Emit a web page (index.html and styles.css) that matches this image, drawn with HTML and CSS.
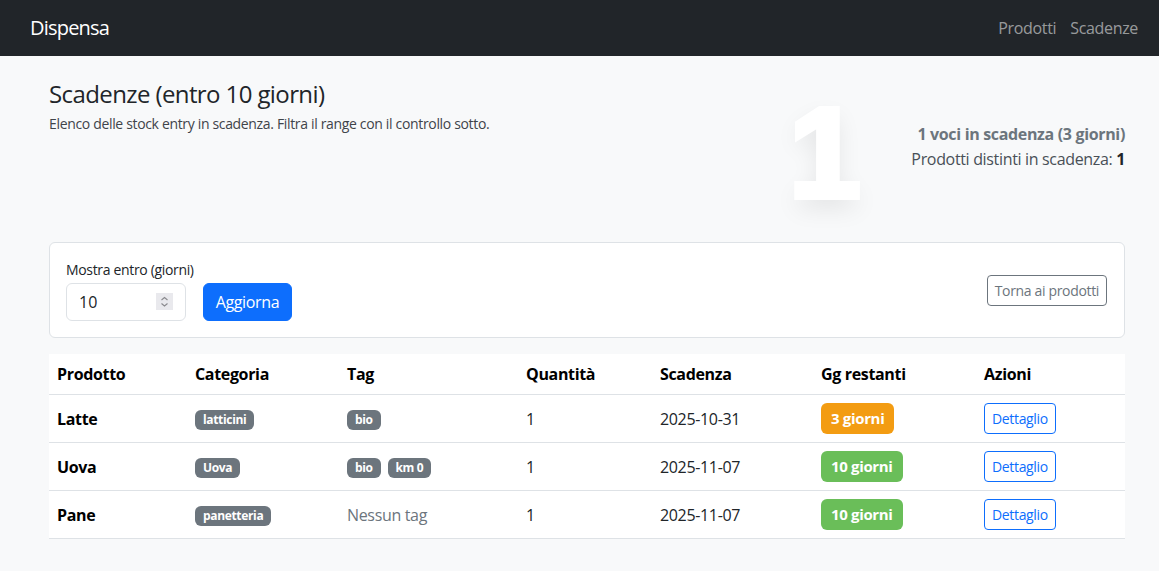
FILE: index.html
```html
<!DOCTYPE html>
<html lang="it">
<head>
<meta charset="utf-8">
<title>Dispensa - Scadenze</title>
<link rel="stylesheet" href="styles.css">
</head>
<body>
<nav class="navbar">
  <a class="brand" href="#">Dispensa</a>
  <div class="nav-links">
    <a class="nav-link" href="#">Prodotti</a>
    <a class="nav-link" href="#">Scadenze</a>
  </div>
</nav>
<main class="main">
  <header class="page-head">
    <div class="titles">
      <h1 class="title">Scadenze (entro 10 giorni)</h1>
      <p class="subtitle">Elenco delle stock entry in scadenza. Filtra il range con il controllo sotto.</p>
    </div>
    <div class="stats">
      <div class="big-number">1</div>
      <div class="stats-text">
        <div class="stats-main">1 voci in scadenza (3 giorni)</div>
        <div class="stats-sub">Prodotti distinti in scadenza: <strong>1</strong></div>
      </div>
    </div>
  </header>

  <section class="card">
    <form class="filter">
      <div class="field">
        <label class="label" for="days">Mostra entro (giorni)</label>
        <div class="input-wrap">
          <input class="input" id="days" type="text" value="10">
          <span class="spinner">
            <svg width="17" height="17" viewBox="0 0 17 17"><path d="M5.5 7 8.5 4.5 11.5 7" fill="none" stroke="#8a8a8e" stroke-width="1.1"/><path d="M5.5 10.5 8.5 13 11.5 10.5" fill="none" stroke="#8a8a8e" stroke-width="1.1"/></svg>
          </span>
        </div>
      </div>
      <button type="button" class="btn btn-primary">Aggiorna</button>
    </form>
    <a class="btn-sm btn-outline-secondary" href="#">Torna ai prodotti</a>
  </section>

  <table class="table">
    <thead>
      <tr>
        <th class="c1">Prodotto</th>
        <th class="c2">Categoria</th>
        <th class="c3">Tag</th>
        <th class="c4">Quantità</th>
        <th class="c5">Scadenza</th>
        <th class="c6">Gg restanti</th>
        <th class="c7">Azioni</th>
      </tr>
    </thead>
    <tbody>
      <tr>
        <td class="name">Latte</td>
        <td><span class="badge">latticini</span></td>
        <td><span class="badge">bio</span></td>
        <td>1</td>
        <td>2025-10-31</td>
        <td><span class="days days-warn">3 giorni</span></td>
        <td><a class="btn-sm btn-outline-primary" href="#">Dettaglio</a></td>
      </tr>
      <tr>
        <td class="name">Uova</td>
        <td><span class="badge">Uova</span></td>
        <td><span class="badge">bio</span> <span class="badge">km 0</span></td>
        <td>1</td>
        <td>2025-11-07</td>
        <td><span class="days days-ok">10 giorni</span></td>
        <td><a class="btn-sm btn-outline-primary" href="#">Dettaglio</a></td>
      </tr>
      <tr>
        <td class="name">Pane</td>
        <td><span class="badge">panetteria</span></td>
        <td class="muted">Nessun tag</td>
        <td>1</td>
        <td>2025-11-07</td>
        <td><span class="days days-ok">10 giorni</span></td>
        <td><a class="btn-sm btn-outline-primary" href="#">Dettaglio</a></td>
      </tr>
    </tbody>
  </table>
</main>
</body>
</html>
```

FILE: styles.css
```css
* { box-sizing: border-box; }
html, body { margin: 0; }
body {
  font-family: "Open Sans", "Noto Sans", sans-serif;
  font-size: 16px;
  line-height: 1.5;
  letter-spacing: -0.021em;
  color: #212529;
  background: #f8f9fa;
}
a { text-decoration: none; }

.navbar {
  height: 56px;
  background: #212529;
  display: flex;
  align-items: center;
  justify-content: space-between;
  padding: 0 14px 0 30px;
}
.brand { color: #fff; font-size: 20px; line-height: 30px; letter-spacing: -0.04em; }
.nav-links { display: flex; }
.nav-link { color: rgba(255,255,255,.55); padding: 0 7px; font-size: 16px; }

.main { padding: 24px 34px 40px 49px; }

.page-head {
  display: flex;
  justify-content: space-between;
  align-items: flex-start;
  margin-bottom: 24px;
}
.title { margin: 0 0 4px; font-size: 24px; font-weight: 400; line-height: 1.2; letter-spacing: -0.025em; }
.subtitle { margin: 0; font-size: 14px; color: #3f444a; }

.stats { display: flex; align-items: center; margin-top: 8px; }
.big-number {
  font-family: "Liberation Sans", Arial, sans-serif;
  font-weight: 700;
  font-size: 128px;
  line-height: 130px;
  letter-spacing: 0;
  color: #fff;
  -webkit-text-stroke: 6px #fff;
  text-shadow: 0 10px 24px rgba(0,0,0,.10);
  margin-right: 51px;
}
.stats-text { text-align: right; line-height: 25px; margin-top: -12px; }
.stats-main { font-weight: 700; color: #6c757d; }
.stats-sub { color: #495057; }
.stats-sub strong { color: #212529; }

.card {
  background: #fff;
  border: 1px solid #dee2e6;
  border-radius: 6px;
  padding: 16px;
  display: flex;
  align-items: center;
  justify-content: space-between;
  margin-bottom: 16px;
}
.filter { display: flex; align-items: flex-end; gap: 9px; }
.field { display: flex; flex-direction: column; }
.label { font-size: 14px; line-height: 21px; margin-bottom: 3px; }
.input-wrap { position: relative; width: 120px; }
.input {
  width: 120px;
  height: 38px;
  border: 1px solid #dee2e6;
  border-radius: 6px;
  padding: 6px 12px;
  font: inherit;
  color: #212529;
  background: #fff;
}
.spinner {
  position: absolute;
  right: 13px;
  top: 10px;
  width: 17px;
  height: 17px;
  background: #e9e9ed;
  display: block;
}
.spinner svg { display: block; }

.btn {
  font: inherit;
  letter-spacing: inherit;
  border: 1px solid transparent;
  border-radius: 6px;
  height: 38px;
  padding: 6px 12px;
  cursor: pointer;
}
.btn-primary { background: #0d6efd; border-color: #0d6efd; color: #fff; }

.btn-sm {
  display: inline-block;
  font-size: 14px;
  line-height: 21px;
  padding: 4px 7px;
  border: 1px solid;
  border-radius: 4px;
}
.btn-outline-secondary { color: #6c757d; border-color: #6c757d; margin-right: 1px; }
.btn-outline-primary { color: #0d6efd; border-color: #0d6efd; }

.table {
  width: 100%;
  border-collapse: collapse;
  background: #fff;
}
.table th, .table td {
  padding: 8px;
  text-align: left;
  vertical-align: middle;
  border-bottom: 1px solid #dee2e6;
}
.table th { font-weight: 700; color: #000; line-height: 24px; }
.table td { height: 46px; color: #212529; line-height: 24px; }
.table td.name { font-weight: 700; color: #000; }
.table td.muted { color: #6c757d; }
.c1 { width: 138px; }
.c2 { width: 152px; }
.c3 { width: 179px; }
.c4 { width: 134px; }
.c5 { width: 161px; }
.c6 { width: 163px; }

.badge {
  display: inline-block;
  background: #6c757d;
  color: #fff;
  font-size: 12px;
  font-weight: 700;
  line-height: 1;
  padding: 4px 8px;
  border-radius: 6px;
  vertical-align: middle;
  margin-right: 3px;
}
.badge:last-child { margin-right: 0; }
.days {
  display: inline-block;
  color: #fff;
  font-weight: 700;
  font-size: 15px;
  line-height: 15px;
  padding: 8px 10px;
  border-radius: 6px;
  vertical-align: middle;
}
.days-warn { background: #f39c12; }
.days-ok { background: #6abe59; }
```
